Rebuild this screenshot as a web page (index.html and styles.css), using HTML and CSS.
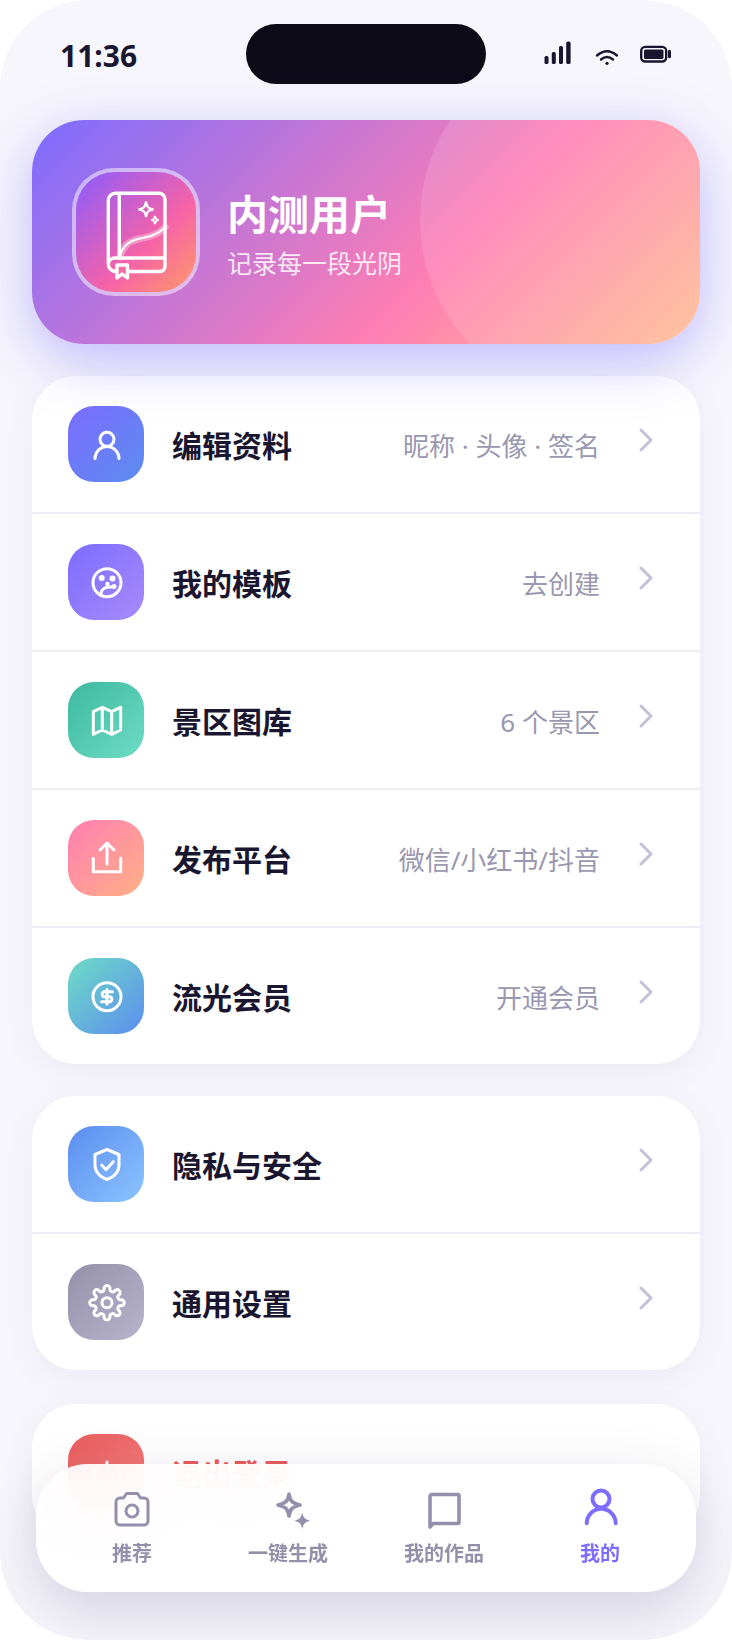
FILE: index.html
```html
<!DOCTYPE html>
<html lang="zh-CN">
<head>
  <meta charset="UTF-8">
  <meta name="viewport" content="width=device-width, initial-scale=1">
  <title>我的</title>
  <link rel="stylesheet" href="styles.css">
</head>
<body>

  <div class="phone">

    <!-- Status bar -->
    <div class="status-bar">
      <span class="status-time">11:36</span>
      <div class="status-island"></div>
      <svg class="status-icons" viewBox="0 0 127 26" width="127" height="26">
        <rect x="0.5" y="15" width="4" height="8" rx="1.6"/>
        <rect x="7.8" y="11" width="4" height="12" rx="1.6"/>
        <rect x="15" y="5" width="4" height="18" rx="1.6"/>
        <rect x="22.2" y="0.5" width="4.400" height="22.5" rx="1.6"/>
        <path class="line" d="M53 14.5Q63 6 73 14.5"/>
        <path class="line" d="M57 18.5Q63 13.5 69 18.5"/>
        <circle cx="63" cy="22.3" r="1.6"/>
        <rect class="line" x="97.2" y="5.9" width="25" height="14.6" rx="4"/>
        <rect x="100" y="8.5" width="19.5" height="9.4" rx="1.5"/>
        <rect x="124" y="8.7" width="3" height="8.6" rx="1.5"/>
      </svg>
    </div>

    <!-- Profile header -->
    <div class="hero">
      <div class="hero-circle"></div>
      <div class="avatar">
        <svg viewBox="0 0 120 120" width="120" height="120">
          <path class="glow" d="M44 85C46 74 54 69 62 67C72 65 82 63 89 55"/>
          <path class="swoosh" d="M44 85C46 74 54 69 62 67C72 65 82 63 89 55"/>
          <path class="book" d="M43.3 86V21.3M32.3 92V28.3a7 7 0 0 1 7-7H83a6 6 0 0 1 6 6V94.5a5 5 0 0 1-5 5H39.8a7.5 7.5 0 0 1-7.5-7.5a6.5 6.5 0 0 1 6.5-6H89"/>
          <path class="book mark" d="M41 93V106L46.2 102L51.5 106V93Z"/>
          <path class="spark" d="M70 29.5C70.8 35 72 36.500 77.500 37.300C72 38.100 70.800 39.600 70 45C69.200 39.600 68 38.100 62.500 37.300C68 36.500 69.200 35 70 29.500Z"/>
          <path class="spark" d="M79 44C79.400 46.800 80 47.500 82.600 48C80 48.500 79.400 49.200 79 52C78.600 49.200 78 48.500 75.400 48C78 47.500 78.600 46.800 79 44Z"/>
        </svg>
      </div>
      <div class="hero-text">
        <h1>内测用户</h1>
        <p>记录每一段光阴</p>
      </div>
    </div>

    <!-- Menu groups -->
    <div class="card">
      <div class="row">
        <div class="row-icon icon-user">
          <svg viewBox="0 0 76 76"><circle cx="39" cy="33.300" r="7"/><path d="M27 52.500a12 12 0 0 1 24 0"/></svg>
        </div>
        <span class="row-title">编辑资料</span>
        <span class="row-meta">昵称 · 头像 · 签名</span>
        <svg class="chevron" viewBox="0 0 14 24"><path d="M2 2L12 12L2 22"/></svg>
      </div>
      <div class="row">
        <div class="row-icon icon-template">
          <svg viewBox="0 0 76 76">
            <circle cx="39" cy="38.700" r="14"/>
            <circle class="dot" cx="33.700" cy="34" r="3"/>
            <circle class="dot" cx="44.500" cy="34.500" r="3"/>
            <circle class="dot" cx="46" cy="42.500" r="2.500"/>
            <circle class="dot" cx="39.500" cy="40" r="2.200"/>
            <path d="M33 50.500C33 46 36 43.500 40 43.300L45 42.700"/>
          </svg>
        </div>
        <span class="row-title">我的模板</span>
        <span class="row-meta">去创建</span>
        <svg class="chevron" viewBox="0 0 14 24"><path d="M2 2L12 12L2 22"/></svg>
      </div>
      <div class="row">
        <div class="row-icon icon-map">
          <svg viewBox="0 0 76 76"><path d="M25.300 29.700L34.300 25.300L43.700 29.700L52.700 25.300V48L43.700 52.300L34.300 48L25.300 52.300ZM34.300 25.300V48M43.700 29.700V52.300"/></svg>
        </div>
        <span class="row-title">景区图库</span>
        <span class="row-meta">6 个景区</span>
        <svg class="chevron" viewBox="0 0 14 24"><path d="M2 2L12 12L2 22"/></svg>
      </div>
      <div class="row">
        <div class="row-icon icon-share">
          <svg viewBox="0 0 76 76"><path d="M25.300 38.300V51.700H52.700V38.300M39 44V23.500M32 30L39 23L46 30"/></svg>
        </div>
        <span class="row-title">发布平台</span>
        <span class="row-meta">微信/小红书/抖音</span>
        <svg class="chevron" viewBox="0 0 14 24"><path d="M2 2L12 12L2 22"/></svg>
      </div>
      <div class="row">
        <div class="row-icon icon-vip">
          <svg viewBox="0 0 76 76">
            <circle cx="39" cy="38.700" r="14"/>
            <path d="M44.500 33.800H36.700a2.500 2.500 0 0 0 0 5H41.300a2.500 2.500 0 0 1 0 5H33.500M39 31.500V46"/>
          </svg>
        </div>
        <span class="row-title">流光会员</span>
        <span class="row-meta">开通会员</span>
        <svg class="chevron" viewBox="0 0 14 24"><path d="M2 2L12 12L2 22"/></svg>
      </div>
    </div>

    <div class="card">
      <div class="row">
        <div class="row-icon icon-privacy">
          <svg viewBox="0 0 76 76"><path d="M39 23.500L51 28.500V39C51 46.500 45.500 51 39 53.500C32.500 51 27 46.500 27 39V28.500Z"/><path d="M33.700 39L38 43.700L45.300 35.700"/></svg>
        </div>
        <span class="row-title">隐私与安全</span>
        <svg class="chevron" viewBox="0 0 14 24"><path d="M2 2L12 12L2 22"/></svg>
      </div>
      <div class="row">
        <div class="row-icon icon-settings">
          <svg viewBox="0 0 76 76">
            <path transform="translate(39 38.700)" d="M-2.810 -13.200A3 3 0 1 1 2.810 -13.200A3 3 0 0 0 7.350 -11.320A3 3 0 1 1 11.320 -7.350A3 3 0 0 0 13.200 -2.810A3 3 0 1 1 13.200 2.810A3 3 0 0 0 11.320 7.350A3 3 0 1 1 7.350 11.320A3 3 0 0 0 2.810 13.200A3 3 0 1 1 -2.810 13.200A3 3 0 0 0 -7.350 11.320A3 3 0 1 1 -11.320 7.350A3 3 0 0 0 -13.200 2.810A3 3 0 1 1 -13.200 -2.810A3 3 0 0 0 -11.320 -7.350A3 3 0 1 1 -7.350 -11.320A3 3 0 0 0 -2.810 -13.200Z"/>
            <circle cx="39" cy="38.700" r="5"/>
          </svg>
        </div>
        <span class="row-title">通用设置</span>
        <svg class="chevron" viewBox="0 0 14 24"><path d="M2 2L12 12L2 22"/></svg>
      </div>
    </div>

    <div class="card card-last">
      <div class="row">
        <div class="row-icon icon-logout">
          <svg viewBox="0 0 76 76"><path d="M39 28V40M30 32a13 13 0 1 0 18 0"/></svg>
        </div>
        <span class="row-title title-danger">退出登录</span>
      </div>
    </div>

    <!-- Bottom navigation -->
    <div class="tab-bar">
      <div class="tab">
        <svg viewBox="0 0 48 48"><path d="M12 12h3.500l3-4.500h11l3 4.500H36a4 4 0 0 1 4 4V35a4 4 0 0 1-4 4H12a4 4 0 0 1-4-4V16a4 4 0 0 1 4-4z"/><circle cx="24" cy="25" r="6"/></svg>
        <span>推荐</span>
      </div>
      <div class="tab">
        <svg viewBox="0 0 48 48"><path class="bold" d="M25 8C26 15 28 17 36 19C28 21 26 23 25 30C24 23 22 21 14 19C22 17 24 15 25 8Z"/><path class="solid" d="M38.300 26.500C39.300 31.500 40.500 33 46 34.700C40.500 36.400 39.300 38 38.300 43C37.300 38 36.100 36.400 30.600 34.700C36.100 33 37.300 31.500 38.300 26.500Z"/></svg>
        <span>一键生成</span>
      </div>
      <div class="tab">
        <svg viewBox="0 0 48 48"><path class="bold" d="M12 8.500H38a1 1 0 0 1 1 1V36.500a1 1 0 0 1-1 1H13L10 41V10.500a2 2 0 0 1 2-2z"/></svg>
        <span>我的作品</span>
      </div>
      <div class="tab tab-active">
        <svg viewBox="0 0 48 48"><circle cx="25" cy="13" r="8.500"/><path d="M10.700 37.300A14.500 14.500 0 0 1 39.700 37.300"/></svg>
        <span>我的</span>
      </div>
    </div>

  </div>

</body>
</html>
```

FILE: styles.css
```css
body {
  margin: 0;
  padding: 0;
  background-color: #fff;
  font-family: "Noto Sans", "Noto Sans CJK SC", sans-serif;
  color: #1a1630;
}

/* Phone frame */
.phone {
  position: relative;
  width: 732px;
  height: 1640px;
  border-radius: 88px;
  overflow: hidden;
  background-color: #f7f6fc;
}

/* Status bar */
.status-bar {
  display: grid;
  grid-template-columns: 186px 240px 1fr;
  align-items: center;
  box-sizing: border-box;
  height: 120px;
  padding: 24px 61px 36px 60px;
}

.status-time {
  padding-top: 4px;
  font-size: 30px;
  font-weight: 700;
  line-height: 56px;
}

.status-island {
  height: 60px;
  border-radius: 30px;
  background-color: #0d0b18;
}

.status-icons {
  justify-self: end;
  fill: #1a1630;
}

.status-icons .line {
  fill: none;
  stroke: #1a1630;
  stroke-width: 2.4;
  stroke-linecap: round;
}

/* Profile header */
.hero {
  position: relative;
  z-index: 1;
  display: flex;
  align-items: center;
  gap: 27px;
  height: 224px;
  margin: 0 32px;
  padding-left: 40px;
  border-radius: 52px;
  overflow: hidden;
  background: linear-gradient(135deg, #7c6cff 0%, #ff7eb3 62%, #ffbe92 100%);
  box-shadow: 0 16px 56px rgba(124, 108, 255, 0.45);
}

.hero-circle {
  position: absolute;
  top: -80px;
  right: -80px;
  width: 360px;
  height: 360px;
  border-radius: 50%;
  background-color: rgba(255, 255, 255, 0.12);
}

.avatar {
  position: relative;
  box-sizing: border-box;
  width: 128px;
  height: 128px;
  border: 4px solid rgba(255, 255, 255, 0.5);
  border-radius: 42px;
  background: linear-gradient(135deg, #8a5cff 0%, #f562a8 60%, #ff9a66 100%) padding-box;
}

.avatar svg {
  display: block;
}

.avatar .book {
  fill: none;
  stroke: #fff;
  stroke-width: 3.4;
  stroke-linecap: round;
  stroke-linejoin: round;
}

.avatar .mark {
  fill: #f56aa0;
}

.avatar .spark {
  fill: none;
  stroke: #fff;
  stroke-width: 2.2;
}

.avatar .swoosh {
  fill: none;
  stroke: #fff;
  stroke-width: 2;
  stroke-linecap: round;
}

.avatar .glow {
  fill: none;
  stroke: #ffe3ec;
  stroke-width: 7;
  stroke-linecap: round;
  opacity: 0.4;
}

.hero-text {
  position: relative;
  padding-top: 4px;
  color: #fff;
}

.hero-text h1 {
  margin: 0 0 6px;
  font-size: 41px;
  font-weight: 700;
  line-height: 52px;
}

.hero-text p {
  margin: 0;
  font-size: 25px;
  line-height: 34px;
  color: rgba(255, 255, 255, 0.85);
}

/* Menu cards */
.card {
  margin: 32px 32px 0;
  border-radius: 44px;
  background-color: #fff;
  box-shadow: 0 8px 32px rgba(90, 80, 150, 0.07);
}

.card-last {
  margin-top: 34px;
}

.row {
  display: flex;
  align-items: center;
  height: 136px;
  padding: 0 47px 0 36px;
  border-bottom: 2px solid #eeedf5;
}

.row:last-child {
  border-bottom: none;
}

.row-icon {
  flex: none;
  width: 76px;
  height: 76px;
  border-radius: 26px;
}

.row-icon svg {
  display: block;
  fill: none;
  stroke: #fff;
  stroke-width: 3;
  stroke-linecap: round;
  stroke-linejoin: round;
}

.row-icon .dot {
  fill: #fff;
  stroke: none;
}

.icon-user { background: linear-gradient(135deg, #7c6cff, #5b8def); }
.icon-template { background: linear-gradient(135deg, #7c6cff, #a78bfa); }
.icon-map { background: linear-gradient(135deg, #3cb8a0, #6edcc4); }
.icon-share { background: linear-gradient(135deg, #ff7eb3, #ffb085); }
.icon-vip { background: linear-gradient(135deg, #6edcc4, #5b8def); }
.icon-privacy { background: linear-gradient(135deg, #5b8def, #8cc4ff); }
.icon-settings { background: linear-gradient(135deg, #9490ab, #b8b4cc); }
.icon-logout { background: linear-gradient(135deg, #e85d5d, #f77f7f); }

.row-title {
  margin-left: 28px;
  font-size: 30px;
  font-weight: 700;
  white-space: nowrap;
}

.title-danger {
  color: #e85d5d;
}

.row-meta {
  margin-left: auto;
  padding-top: 2px;
  font-size: 26px;
  color: #9a97b0;
  white-space: nowrap;
}

.chevron {
  flex: none;
  width: 14px;
  height: 24px;
  margin-left: 39px;
  margin-bottom: 8px;
  fill: none;
  stroke: #c3c0d8;
  stroke-width: 3;
  stroke-linecap: round;
  stroke-linejoin: round;
}

.row-title + .chevron {
  margin-left: auto;
}

/* Bottom navigation */
.tab-bar {
  position: absolute;
  left: 36px;
  right: 36px;
  top: 1464px;
  z-index: 2;
  display: grid;
  grid-template-columns: repeat(4, 156px);
  box-sizing: border-box;
  height: 128px;
  padding: 22px 18px 0;
  border-radius: 52px;
  background-color: rgba(255, 255, 255, 0.92);
  backdrop-filter: blur(30px);
  box-shadow: 0 20px 60px rgba(50, 45, 90, 0.18);
}

.tab {
  display: flex;
  flex-direction: column;
  align-items: center;
  gap: 6px;
  color: #9490ab;
  font-size: 20px;
  font-weight: 700;
  line-height: 28px;
}

.tab svg {
  display: block;
  width: 48px;
  height: 48px;
  fill: none;
  stroke: #9490ab;
  stroke-width: 3;
  stroke-linecap: round;
  stroke-linejoin: round;
}

.tab svg .bold {
  stroke-width: 3.6;
}

.tab svg .solid {
  fill: #9490ab;
  stroke: none;
}

.tab-active {
  color: #7c6cff;
}

.tab-active svg {
  stroke: #7c6cff;
  stroke-width: 4;
}
```
